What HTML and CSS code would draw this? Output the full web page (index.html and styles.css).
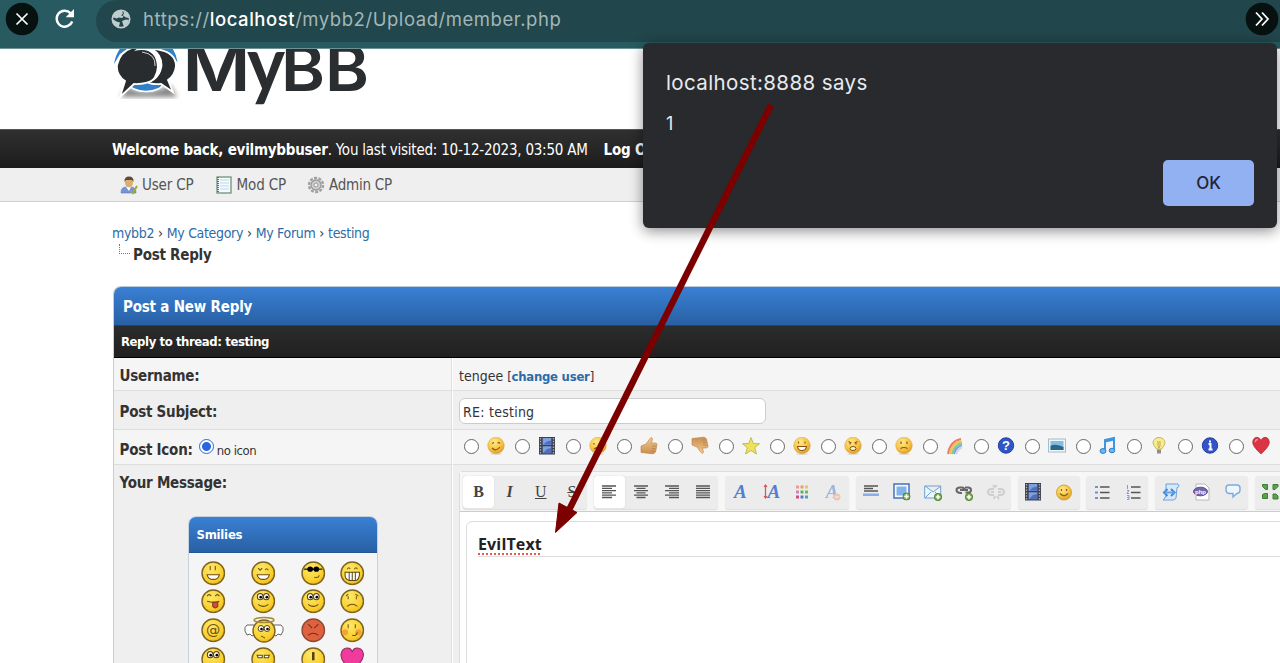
FILE: index.html
```html
<!DOCTYPE html>
<html lang="en">
<head>
<meta charset="utf-8">
<title>Post Reply</title>
<link rel="stylesheet" href="styles.css">
</head>
<body>
<svg class="defs" width="0" height="0">
  <defs>
    <radialGradient id="gold" cx=".4" cy=".3" r=".75"><stop offset="0" stop-color="#ffe98a"/><stop offset=".6" stop-color="#f5c440"/><stop offset="1" stop-color="#d8962a"/></radialGradient>
    <radialGradient id="yel" cx=".4" cy=".3" r=".8"><stop offset="0" stop-color="#ffe868"/><stop offset=".7" stop-color="#f8ce2c"/><stop offset="1" stop-color="#e3a81a"/></radialGradient>
    <linearGradient id="hand" x1="0" y1="0" x2="0" y2="1"><stop offset="0" stop-color="#f3cb8e"/><stop offset="1" stop-color="#c98d50"/></linearGradient>
    <symbol id="face" viewBox="0 0 18 18"><ellipse cx="9" cy="17" rx="6" ry="1" fill="#ddd"/><circle cx="9" cy="8.5" r="8.3" fill="url(#gold)" stroke="#dda23a" stroke-width=".5"/></symbol>
    <symbol id="film" viewBox="0 0 18 18"><rect x="1" y="0" width="16" height="17.5" fill="#3b3f4e"/><path d="M2.5 1v16M15.5 1v16" stroke="#a7adbd" stroke-width="1.4" stroke-dasharray="1.5 1.3"/><path d="M4.7 1h8.6v7H4.7zM4.7 9.3h8.6v7H4.7z" fill="#7f9fe0"/><path d="M5 7.5l4-3 4-1v4.3zM5 16l4-4 4-1v5z" fill="#4e70bb"/></symbol>
    <symbol id="thumb" viewBox="0 0 18 18"><path d="M1 9l5-2 4-5.500q2-2 2.500.500l-1 4h4q2 .600 1.500 2l-1.500 7q-1 2-3.500 1.800L5.500 16 1 15.500z" fill="url(#hand)" stroke="#b9804a" stroke-width=".6"/><path d="M12 9h4M12 11.500h3.500M11.500 14H15" stroke="#b9804a" stroke-width=".8"/></symbol>
    <symbol id="plus" viewBox="0 0 8 8"><circle cx="4" cy="4" r="3.700" fill="#7aad55" stroke="#447a25" stroke-width=".8"/><path d="M4 1.800v4.400M1.800 4h4.400" stroke="#fff" stroke-width="1.500"/></symbol>
    <symbol id="smile" viewBox="0 0 24 24"><circle cx="12" cy="12" r="11" fill="url(#yel)" stroke="#7e651f" stroke-width="1.400"/></symbol>
    <symbol id="eyes" viewBox="0 0 24 24"><ellipse cx="9" cy="7.500" rx="2.800" ry="3" fill="#fff" stroke="#5a4310"/><ellipse cx="15" cy="7.500" rx="2.800" ry="3" fill="#fff" stroke="#5a4310"/><circle cx="9.500" cy="8" r="1.300"/><circle cx="15.500" cy="8" r="1.300"/></symbol>
  </defs>
</svg>

<div class="window">
  <header class="browser">
    <svg class="round-btn" viewBox="0 0 34 34"><circle cx="17" cy="17" r="16.300" fill="#07110f"/><path d="M11.500 11.500l11 11m0-11l-11 11" stroke="#fff" stroke-width="1.700"/></svg>
    <svg class="reload" viewBox="0 0 22 22"><path d="M18.200 13.500A8 8 0 1 1 16.500 5.200L18.500 7.500" fill="none" stroke="#fff" stroke-width="2.400"/><path d="M20 1v8.300h-8.300z" fill="#fff"/></svg>
    <div class="omnibox">
      <svg class="globe" viewBox="0 0 20 20"><circle cx="10" cy="10" r="8.700" fill="#21464b" stroke="#c0cdce" stroke-width="1.700"/><path d="M8 1.500Q3 3 1.500 8l4 1.500 2.500-1 3.500.500 1-2-2.500-.500 2-2-1-2.500zM12 2l1 2-1 2.500 3 2 3 .500Q18 4 12 2zM1.500 10l4 2.500 3.500 1-.500 2-1 2.800Q2 16 1.500 10zM11 12l4-1.500 3 .500Q17 16 13 18l-1-3z" fill="#c0cdce"/></svg>
      <span class="url">https://<b>localhost</b>/mybb2/Upload/member.php</span>
    </div>
    <svg class="round-btn more" viewBox="0 0 34 34"><circle cx="17" cy="17" r="16.300" fill="#07110f"/><path d="M11 10.500l6 6.500-6 6.500M17 10.500l6 6.500-6 6.500" fill="none" stroke="#fff" stroke-width="1.800"/></svg>
  </header>

  <div class="brand">
    <svg class="logo" viewBox="0 0 270 79" width="270" height="79">
      <defs><filter id="soft"><feGaussianBlur stdDeviation="2.500"/></filter></defs>
      <path d="M8 48L16 38Q34 48 58 36l7 12z" fill="#888" filter="url(#soft)"/>
      <path d="M2 15Q5-3 20-10h30Q63-3 65.500 13L60 8Q50-2 34-2T8 5z" fill="#2f7fcb"/>
      <ellipse cx="34" cy="34" rx="17" ry="8.500" fill="#2f7fcb" stroke="#fff" stroke-width="1.500"/>
      <path d="M44 0Q64 3 64 17Q63 26 56 31l5 12-12-8Q38 36 34 32V2z" fill="#292c2e" stroke="#fff" stroke-width="1.800"/>
      <path d="M26-2Q50-1 49.500 17Q46 36 22 35L8 48l5-16Q4 26 5 16Q9-1 26-2z" fill="#292c2e" stroke="#fff" stroke-width="1.800"/>
      <path d="M22 2Q44-3 45 18Q44 29 36 34Q49 29 49.500 17Q49-3 29-3z" fill="#fff"/>
      <path d="M30 3Q44 5 43 17" fill="none" stroke="#fff" stroke-width=".8"/>
      <g class="logo-word"><text x="70.500" y="42" font-size="63" textLength="68" lengthAdjust="spacingAndGlyphs">M</text><text class="logo-y" x="135" y="42" font-size="76" textLength="38" lengthAdjust="spacingAndGlyphs">y</text><text x="169" y="42" font-size="63" textLength="88" lengthAdjust="spacingAndGlyphs">BB</text></g>
    </svg>
  </div>

  <div class="welcome"><strong class="w-name">Welcome back, evilmybbuser</strong><span class="w-visit">. You last visited: 10-12-2023, 03:50 AM</span><strong class="w-log">Log Out</strong></div>

  <nav class="panel-links">
    <a><svg viewBox="0 0 18 18"><path d="M1 17q0-6 5-6h5q5 0 5 6z" fill="#7795cf" stroke="#5a78b6" stroke-width=".6"/><path d="M6 11l3 4 2-4z" fill="#fff"/><ellipse cx="9" cy="6.500" rx="4" ry="5" fill="#dcae72"/><path d="M4.500 6Q4 .500 9 .500T13.500 6L12 4H6z" fill="#5e4a35"/><path d="M11 15l2 2 4-7" fill="none" stroke="#a3a83a" stroke-width="2"/></svg><span>User CP</span></a>
    <a><svg viewBox="0 0 18 18"><rect x="2" y="1" width="14" height="16" fill="#f4fafd" stroke="#6c9475" stroke-width="1.300"/><path d="M5 4h9M5 7h9M5 10h9M5 13h9" stroke="#c2d7e9"/><path d="M3 1v16" stroke="#557084" stroke-width="2" stroke-dasharray="1 1"/></svg><span>Mod CP</span></a>
    <a><svg viewBox="0 0 18 18"><circle cx="9" cy="9" r="7" fill="none" stroke="#a0a0a0" stroke-width="2.400" stroke-dasharray="3 1.400"/><circle cx="9" cy="9" r="5" fill="#cfcfcf" stroke="#999" stroke-width="1.300"/><circle cx="9" cy="9" r="2" fill="#f3f3f3" stroke="#999"/></svg><span class="admin">Admin CP</span></a>
  </nav>

  <main class="content">
    <div class="crumbs"><a>mybb2</a><i>›</i><a>My Category</a><i>›</i><a>My Forum</a><i>›</i><a>testing</a></div>
    <div class="active-crumb"><span class="elbow"></span><strong>Post Reply</strong></div>

    <section class="tborder">
      <h1 class="thead">Post a New Reply</h1>
      <div class="tcat">Reply to thread: testing</div>
      <div class="row r1"><div class="label"><b>Username:</b></div><div class="cell"><span class="tengee">tengee</span> <span class="change">[<b>change user</b>]</span></div></div>
      <div class="row r2 alt"><div class="label"><b>Post Subject:</b></div><div class="cell"><div class="subject">RE: testing</div></div></div>
      <div class="row r3"><div class="label"><b>Post Icon:</b><span class="radio on"></span><span class="noicon">no icon</span></div>
        <div class="cell icons">
          <label><span class="radio"></span><svg viewBox="0 0 18 18"><use href="#face"/><path d="M5 6.500l2-1M10.500 6q1.500-1 2.500.500M5 11q4 4 8-1" fill="none" stroke="#89521a" stroke-width="1.200"/></svg></label>
          <label><span class="radio"></span><svg viewBox="0 0 18 18"><use href="#film"/></svg></label>
          <label><span class="radio"></span><svg viewBox="0 0 18 18"><use href="#face"/><path d="M5 6v1.500M12 6v1.500M5 12q4-3 8 0" fill="none" stroke="#89521a" stroke-width="1.300"/></svg></label>
          <label><span class="radio"></span><svg viewBox="0 0 18 18"><use href="#thumb"/></svg></label>
          <label><span class="radio"></span><svg viewBox="0 0 18 18"><g transform="matrix(1 0 0 -1 0 17)"><use href="#thumb" width="18" height="18"/></g></svg></label>
          <label><span class="radio"></span><svg viewBox="0 0 18 18"><path d="M9 .500l2.300 6 6.200.200-4.800 4L14.500 17 9 13.500 3.500 17l1.800-6.300L.500 6.700l6.200-.200z" fill="#ece25b" stroke="#b5b138" stroke-width=".8"/></svg></label>
          <label><span class="radio"></span><svg viewBox="0 0 18 18"><use href="#face"/><path d="M5.500 4.500v2M12 4.500v2M4.500 9.500h9q-.500 4-4.500 4t-4.500-4z" fill="#fff" stroke="#89521a" stroke-width="1.100"/></svg></label>
          <label><span class="radio"></span><svg viewBox="0 0 18 18"><use href="#face"/><path d="M4.500 4.500l3 1.500M13.500 4.500l-3 1.500M6 6v1.500M12 6v1.500" stroke="#89521a" stroke-width="1.200"/><ellipse cx="9" cy="11.500" rx="3" ry="2" fill="#fff1c0" stroke="#89521a"/></svg></label>
          <label><span class="radio"></span><svg viewBox="0 0 18 18"><use href="#face"/><path d="M6 4.500v2.500M12 4.500v2.500M5.500 11.500q3.500-2 7 0" fill="none" stroke="#89521a" stroke-width="1.200"/></svg></label>
          <label><span class="radio"></span><svg viewBox="0 0 18 18" fill="none" stroke-width="2"><path d="M2 17Q4 4 15 2" stroke="#f07a6a"/><path d="M4 17Q6 6 15.500 4" stroke="#f5bf54"/><path d="M6 17Q8 8 16 6" stroke="#83cf72"/><path d="M8 17Q10 10 16 8" stroke="#6fa6ef"/><path d="M10 17Q12 12 16 10" stroke="#d9cdf0"/></svg></label>
          <label><span class="radio"></span><svg viewBox="0 0 18 18"><circle cx="9" cy="8.500" r="7.700" fill="#3155c8" stroke="#2340a0"/><text class="glyph" x="9" y="13">?</text></svg></label>
          <label><span class="radio"></span><svg viewBox="0 0 18 18"><rect x=".5" y="2" width="17" height="13" fill="#eef7fb" stroke="#a9bac8"/><path d="M2.500 4h13v9h-13z" fill="#82bde4"/><path d="M2.500 9q4-3 13 1v3h-13z" fill="#2d6784"/></svg></label>
          <label><span class="radio"></span><svg viewBox="0 0 18 18"><path d="M6 13V3l9-2v12" fill="none" stroke="#3f96df" stroke-width="2"/><path d="M6 4l9-2" stroke="#3f96df" stroke-width="3"/><ellipse cx="4" cy="14" rx="3" ry="2.400" fill="#6bb6f0" stroke="#2d82cb"/><ellipse cx="13" cy="13.500" rx="2.800" ry="2.300" fill="#6bb6f0" stroke="#2d82cb"/></svg></label>
          <label><span class="radio"></span><svg viewBox="0 0 18 18"><path d="M6.500 12Q3 8 3 5.500Q4 .500 9 .500t6 5Q15 8 11.500 12z" fill="#f5ec98" stroke="#c7b658"/><path d="M8 4v5l1 2 1-2V4" fill="none" stroke="#d1a43d"/><path d="M7 12.500h4v4H7z" fill="#8e8e88"/></svg></label>
          <label><span class="radio"></span><svg viewBox="0 0 18 18"><circle cx="9" cy="8.500" r="7.700" fill="#3155c8" stroke="#2340a0"/><path d="M7.500 7h2v5.500m-2 0h4M9 3.500v2" fill="none" stroke="#fff" stroke-width="2"/></svg></label>
          <label><span class="radio"></span><svg viewBox="0 0 18 18"><path d="M9 17Q0 9 .700 4.500Q2-.500 6 .500 8 1 9 3.500 10 1 12 .500q4-1 5.300 4Q18 9 9 17z" fill="#dc3443" stroke="#a92632" stroke-width=".7"/><path d="M3 5q1-3 3-2.500" stroke="#f58f95" stroke-width="1.500" fill="none"/></svg></label>
        </div></div>
      <div class="row r4 alt">
        <div class="label"><b class="t-msg">Your Message:</b>
          <div class="smilies"><h2>Smilies</h2>
            <div class="smile-grid">
              <svg viewBox="0 0 24 24"><use href="#smile"/><path d="M9 5v4M14 5v4" stroke="#694e12"/><path d="M6 13.500h12q-1 4.500-6 4.500t-6-4.500z" fill="#fff" stroke="#694e12"/></svg>
              <svg viewBox="0 0 24 24"><use href="#smile"/><path d="M7 7l2 2 2-2M14 9q1-3 3 0" fill="none" stroke="#694e12"/><path d="M6 13.500h12q-1 4.500-6 4.500t-6-4.500z" fill="#fff" stroke="#694e12"/></svg>
              <svg viewBox="0 0 24 24"><use href="#smile"/><path d="M3 8h18" stroke="#111" stroke-width="1.200"/><ellipse cx="9" cy="8" rx="2.800" ry="2.500"/><ellipse cx="15" cy="8" rx="2.800" ry="2.500"/><path d="M13 16q4 1 5-2" fill="none" stroke="#694e12"/></svg>
              <svg viewBox="0 0 24 24"><use href="#smile"/><path d="M7 8q2-3 3 0M14 8q2-3 3 0" fill="none" stroke="#694e12"/><path d="M5 11h14v3q-1 5-4 5H9q-4-1-4-5zM9 11v8M12 11v8M15 11v8" fill="#fff" stroke="#594512"/></svg>
              <svg viewBox="0 0 24 24"><use href="#smile"/><path d="M6 7q2-3 4 0M14 7q2-3 4 0M6 12q6 2 12 0" fill="none" stroke="#694e12"/><path d="M11.500 13h5v4q-2.500 3-5 0z" fill="#cf5035" stroke="#81351f"/></svg>
              <svg viewBox="0 0 24 24"><use href="#smile"/><use href="#eyes"/><path d="M7 15q5 4 10 0" fill="none" stroke="#694e12"/></svg>
              <svg viewBox="0 0 24 24"><use href="#smile"/><use href="#eyes"/><path d="M7 15q5 4 10 0" fill="none" stroke="#694e12"/></svg>
              <svg viewBox="0 0 24 24"><use href="#smile"/><path d="M8 5l-2 2M15 5l3 2M8 7v3M16 7v3M7 17q5-4 10 0" fill="none" stroke="#694e12"/></svg>
              <svg viewBox="0 0 24 24"><use href="#smile"/><text class="at" x="12" y="16.500">@</text></svg>
              <svg class="angel" viewBox="0 0 40 26"><path d="M10 8H3q-3 2-2 6l2 4 3-1 2 2 5-2zM30 8h7q3 2 2 6l-2 4-3-1-2 2-5-2z" fill="#fff" stroke="#666"/><use href="#smile" x="8" y="2" width="24" height="24"/><use href="#eyes" x="8" y="4" width="24" height="24"/><ellipse cx="20" cy="3" rx="10" ry="2.500" fill="none" stroke="#aa8b35" stroke-width="1.500"/><path d="M17 19l4 2" stroke="#694e12"/></svg>
              <svg viewBox="0 0 24 24"><circle cx="12" cy="12" r="11" fill="#df613d" stroke="#8e4935" stroke-width="1.300"/><path d="M7 6l4 4M17 6l-4 4M7 17q5-4 10 0" fill="none" stroke="#762e20"/></svg>
              <svg viewBox="0 0 24 24"><use href="#smile"/><circle cx="5" cy="14" r="3" fill="#f4a03b"/><circle cx="18" cy="14" r="3" fill="#f4a03b"/><path d="M8 6v4M15 6v4M12 17q4 1 5-3" fill="none" stroke="#694e12"/></svg>
              <svg viewBox="0 0 24 24"><use href="#smile"/><use href="#eyes"/></svg>
              <svg viewBox="0 0 24 24"><use href="#smile"/><path d="M6 8h5v2.500H7zM13 8h5l-1 2.500h-4z" fill="#fff" stroke="#594512"/></svg>
              <svg viewBox="0 0 24 24"><use href="#smile"/><path d="M12 5v8" stroke="#514014" stroke-width="2.500"/></svg>
              <svg viewBox="0 0 24 24"><path d="M12 23Q0 14 1 7Q2 1 7 1q4 0 5 4 1-4 5-4 5 0 6 6 0 7-11 16z" fill="#f03b9c" stroke="#8b2c62"/></svg>
            </div>
          </div>
        </div>
        <div class="cell">
          <div class="editor">
            <div class="toolbar">
              <div class="group"><span class="btn on serif"><b>B</b></span><span class="btn serif"><b><i>I</i></b></span><span class="btn serif"><u>U</u></span><span class="btn serif"><s>S</s></span></div>
              <div class="group align"><span class="btn on"><svg viewBox="0 0 14 14"><path d="M0 1h14M0 3.300h10M0 5.600h14M0 7.900h10M0 10.200h14M0 12.500h10" stroke="#555" stroke-width="1.300"/></svg></span><span class="btn"><svg viewBox="0 0 14 14"><path d="M0 1h14M2.500 3.300h9M0 5.600h14M2.500 7.900h9M0 10.200h14M2.500 12.500h9" stroke="#555" stroke-width="1.300"/></svg></span><span class="btn"><svg viewBox="0 0 14 14"><path d="M0 1h14M4 3.300h10M0 5.600h14M4 7.900h10M0 10.200h14M4 12.500h10" stroke="#555" stroke-width="1.300"/></svg></span><span class="btn"><svg viewBox="0 0 14 14"><path d="M0 1h14M0 3.300h14M0 5.600h14M0 7.900h14M0 10.200h14M0 12.500h14" stroke="#555" stroke-width="1.300"/></svg></span></div>
              <div class="group"><span class="btn blue-a"><i>A</i></span><span class="btn blue-a size"><svg viewBox="0 0 5 16"><path d="M2.500 1v13M1 3l1.500-2L4 3M1 12l1.500 2L4 12" fill="none" stroke="#d05656" stroke-width="1.200"/></svg><i>A</i></span><span class="btn dots"><svg viewBox="0 0 16 16"><path d="M2 1.500h3v3H2z" fill="#e9a08b"/><path d="M6.500 1.500h3v3h-3z" fill="#dfa465"/><path d="M11 1.500h3v3h-3z" fill="#e5c567"/><path d="M2 6.500h3v3H2z" fill="#d780c1"/><path d="M6.500 6.500h3v3h-3z" fill="#56b56b"/><path d="M11 6.500h3v3h-3z" fill="#73b85d"/><path d="M2 11.500h3v3H2z" fill="#d04c83"/><path d="M6.500 11.500h3v3h-3z" fill="#5e77cf"/><path d="M11 11.500h3v3h-3z" fill="#48a5b5"/></svg></span><span class="btn blue-a clear"><i>A</i><svg viewBox="0 0 8 8"><circle cx="4" cy="4" r="3.500" fill="#e9a27c"/><path d="M2 4h4" stroke="#fff"/></svg></span></div>
              <div class="group"><span class="btn"><svg viewBox="0 0 18 18"><path d="M2 3h14M2 5.500h9M2 8h14" stroke="#555" stroke-width="1.400"/><path d="M1 10.500h16v2.500H1z" fill="#88ade7"/></svg></span><span class="btn"><svg viewBox="0 0 18 18"><rect x="1" y="1" width="15" height="14" fill="#f5faff" stroke="#4672b9" stroke-width="1.500"/><path d="M3.500 3.500h10v9h-10z" fill="#82b2e7"/><use href="#plus" x="9.500" y="9.500" width="8" height="8"/></svg></span><span class="btn"><svg viewBox="0 0 18 18"><path d="M.700 3h16v12h-16zM1 3l8 6 8-6M1 15l6-6M17 15l-6-6" fill="#edf6fe" stroke="#6ca0d2"/><use href="#plus" x="10" y="10" width="8" height="8"/></svg></span><span class="btn"><svg viewBox="0 0 18 18"><path d="M7 10H5q-3.500-.500-3.500-3T5 4.500h2q2.500 0 2.500 2.500M5 7h8M10.500 9.500H13q3 0 3-2.500t-3-2.500h-3" fill="none" stroke="#666" stroke-width="2"/><use href="#plus" x="10" y="10" width="8" height="8"/></svg></span><span class="btn pale"><svg viewBox="0 0 18 18"><path d="M7 12H4q-3-.500-3-3t3-3h3M11 6h3q3 .500 3 3t-3 3h-3M4 9h3M11 9h3M8 5L6 2M10 13l2 3M9 4V2M8 13l-1 3" fill="none" stroke="#999" stroke-width="2"/></svg></span></div>
              <div class="group"><span class="btn"><svg viewBox="0 0 18 18"><use href="#film"/></svg></span><span class="btn"><svg viewBox="0 0 18 18"><circle cx="9" cy="9.500" r="7.500" fill="url(#gold)" stroke="#d8a336"/><path d="M6.500 6v2M11.500 6v2M5 10.500q4 4.500 8 0" fill="none" stroke="#89611d" stroke-width="1.300"/></svg></span></div>
              <div class="group list"><span class="btn"><svg viewBox="0 0 16 16"><path d="M6 3h9.500M6 8.500h9.500M6 14h9.500" stroke="#555" stroke-width="1.400"/><path d="M1 2h3v2H1zM1 7.500h3v2H1zM1 13h3v2H1z" fill="#6e91df"/></svg></span><span class="btn"><svg viewBox="0 0 16 16"><path d="M6 3h9.500M6 8.500h9.500M6 14h9.500" stroke="#555" stroke-width="1.400"/><path d="M2.500 1v4M2 6.500h2l-2 3h2M2 11.500h2v2H2h2v2H2" fill="none" stroke="#7b9cd9"/></svg></span></div>
              <div class="group"><span class="btn"><svg viewBox="0 0 18 18"><path d="M4 1h12q2 2 0 3.500h-1L14 15q-1 2-3 2H1q2-1 2-3h1z" fill="#d6e9fc" stroke="#71a0d5"/><path d="M5.500 6L2 9.500 5.500 13M9 6l3.500 3.500L9 13" fill="none" stroke="#4289d6" stroke-width="2"/><path d="M3 9.500h9" stroke="#66a5e4" stroke-width="2"/></svg></span><span class="btn"><svg viewBox="0 0 18 18"><path d="M3 1h9l4 4v12H3z" fill="#fff" stroke="#b7b7bf"/><ellipse cx="7.500" cy="8.500" rx="7" ry="4.300" fill="#6e68ad" stroke="#54508d"/><text class="php" x="7.500" y="10.500">php</text></svg></span><span class="btn"><svg viewBox="0 0 18 18"><path d="M5 2h8q3 0 3 3v2q0 3-3 3.500L9 14v-3.500H5Q2 10 2 7V5q0-3 3-3z" fill="#edf6ff" stroke="#7fa9dd" stroke-width="1.400"/></svg></span></div>
              <div class="group"><span class="btn"><svg viewBox="0 0 18 18" fill="#5ca04c" stroke="#3c7f30"><path d="M1.500 1.500h5v5h-2l-3-3zM12 1.500h5v2l-3 3h-2zM1.500 11.500l2-1h3v5h-5zM12 11h3l2 2v3h-5z"/></svg></span></div>
            </div>
            <div class="textarea"><div class="line"><span class="evil">EvilText</span></div></div>
          </div>
        </div>
      </div>
    </section>
  </main>

  <div class="dialog">
    <div class="d-title">localhost:8888 says</div>
    <div class="d-msg">1</div>
    <button class="ok">OK</button>
  </div>
  <svg class="arrow" viewBox="0 0 1280 663"><path d="M771 105L567 514" stroke="#7c0000" stroke-width="6.500"/><path d="M555.500 532.500L559 503l18 9.500z" fill="#7c0000" stroke="#7c0000"/></svg>
</div>
</body>
</html>
```

FILE: styles.css
```css
* { box-sizing: border-box; }
body { margin: 0; background: #fff; color: #333; font-family: "DejaVu Sans Condensed", "DejaVu Sans", sans-serif; font-size: 14px; font-stretch: condensed; }
svg { display: block; flex: none; overflow: visible; }
.defs { position: absolute; }
h1, h2 { margin: 0; }
.window { position: relative; width: 1280px; height: 663px; overflow: hidden; }

.browser { display: flex; height: 49px; background: #285b61; border-bottom: 1px solid #6d9296; position: relative; z-index: 2; }
.round-btn { width: 34px; height: 34px; margin: 2px 0 0 5px; }
.reload { width: 22px; height: 22px; margin: 8px 0 0 15px; }
.omnibox { display: flex; align-items: center; gap: 12px; flex: 1; height: 42px; margin-left: 20px; padding: 0 0 5px 15px; background: #21464b; border-radius: 21px 0 0 21px; }
.globe { width: 20px; height: 20px; }
.url { font: 18.500px/24px Inter, sans-serif; letter-spacing: .55px; color: #a4b6b8; white-space: nowrap; }
.url b { font-weight: 500; color: #fff; }
.more { position: absolute; right: 1px; top: 0; }

.brand { height: 80px; padding-left: 112px; overflow: hidden; }
.logo-word { font-family: Inter, sans-serif; font-weight: 600; fill: #2b2e30; }
.logo-y { font-family: Lato, sans-serif; font-weight: 700; }
.welcome { display: flex; height: 39px; padding-left: 112px; line-height: 40px; font-size: 15px; letter-spacing: -.23px; color: #fff; background: linear-gradient(#303030, #1c1c1c); border-top: 1px solid #555; white-space: nowrap; }
.w-log { margin-left: 16px; }
.panel-links { display: flex; height: 34px; padding-left: 120px; background: #efefef; border-bottom: 1px solid #d0d0d0; }
.panel-links a { display: flex; align-items: center; gap: 4px; margin-right: 21px; padding-top: 1px; font-size: 15px; letter-spacing: -.15px; color: #555; }
.panel-links svg { width: 18px; height: 18px; }
.panel-links .admin { letter-spacing: -.25px; }
.content { padding: 21px 0 0 112px; }
.crumbs { display: flex; line-height: 20px; font-size: 14px; letter-spacing: -.33px; color: #333; }
.crumbs a { color: #2d6ca8; }
.crumbs i { font-style: normal; margin: 0 4px; }
.active-crumb { display: flex; height: 22px; line-height: 25px; font-size: 15px; letter-spacing: -.25px; }
.elbow { width: 11px; height: 10px; margin: 1px 3px 0 7px; border-left: 1px dotted #777; border-bottom: 1px dotted #777; }

.tborder { width: 1300px; margin: 21px 0 0 1px; border: 1px solid #ccc; border-top-color: #bcd; border-radius: 8px 8px 0 0; }
.thead { height: 38px; padding-left: 9px; line-height: 40px; font-size: 15px; letter-spacing: -.2px; color: #fff; background: linear-gradient(#3a80d4, #2860a4); border-radius: 7px 7px 0 0; }
.tcat { height: 33px; padding-left: 7px; line-height: 32px; font-size: 13px; letter-spacing: -.42px; font-weight: bold; color: #fff; background: linear-gradient(#2c2c2c, #202020); border-top: 1px solid #20436d; border-bottom: 1px solid #000; }
.row { display: flex; background: #f5f5f5; }
.row.alt { background: #efefef; }
.label { flex: none; width: 338px; padding-left: 5.500px; font-size: 15px; letter-spacing: -.25px; border-right: 1px solid #dedede; border-bottom: 1px solid #dedede; }
.cell { flex: 1; padding-left: 6px; border-bottom: 1px solid #dedede; border-left: 1px solid #fff; }
.r1 { height: 33px; line-height: 37px; }
.r2 { height: 39px; line-height: 43px; }
.r3 { height: 35px; }
.r4 { height: 220px; }
.r3 .label { display: flex; line-height: 40px; }
.tengee { font-size: 14px; }
.change { font-size: 13px; letter-spacing: -.25px; }
.change b { color: #2d6ca8; }
.subject { width: 307px; height: 26px; margin-top: 7px; padding-left: 3px; line-height: 26px; font-size: 14px; letter-spacing: .25px; background: #fff; border: 1px solid #ccc; border-radius: 6px; }
.radio { width: 15px; height: 15px; flex: none; background: #fff; border: 1px solid #666; border-radius: 50%; }
.radio.on { margin: 9px 3px 0 6px; border: 1px solid #2b67dc; background: radial-gradient(#2b67dc 0 4px, #fff 5px); }
.noicon { font-size: 13px; letter-spacing: -.4px; line-height: 41px; }
.icons { display: flex; padding-left: 11px; }
.icons label { display: flex; width: 51px; flex: none; gap: 8px; }
.icons .radio { margin-top: 9px; }
.icons svg { width: 18px; height: 18px; margin-top: 7px; }
.glyph { font: bold 13px "Liberation Sans", sans-serif; fill: #fff; text-anchor: middle; }
.t-msg { display: block; height: 50.500px; line-height: 36px; }
.smilies { width: 190px; height: 190px; margin-left: 68px; background: #f5f5f5; border: 1px solid #c7d2df; border-radius: 8px 8px 0 0; }
.smilies h2 { height: 36px; padding-left: 8px; line-height: 36px; font-size: 13px; color: #fff; background: linear-gradient(#3a80d4, #2860a4); border-bottom: 1px solid #26568f; border-radius: 7px 7px 0 0; }
.smile-grid { display: grid; grid-template-columns: 50px 50px 49px 29px; grid-auto-rows: 28.700px; justify-items: center; align-items: center; padding-top: 6px; }
.smile-grid svg { width: 24.500px; height: 24.500px; }
.smile-grid .angel { width: 40px; height: 26px; }
.at { font: 14px "DejaVu Sans", sans-serif; letter-spacing: 0; fill: #6b4e13; text-anchor: middle; }
.editor { width: 1000px; height: 220px; margin-top: 6px; background: #fff; border: 1px solid #ddd; border-radius: 4px 0 0; }
.toolbar { display: flex; gap: 6.500px; height: 40px; padding: 4px 0 0 3px; background: #f7f7f7; border-bottom: 1px solid #ccc; }
.group { display: flex; flex: none; height: 33px; background: #ececec; border-radius: 3px; box-shadow: 0 1px 1px #ddd; }
.btn { display: flex; width: 31.100px; height: 32px; align-items: center; justify-content: center; }
.btn.on { background: #fff; border-radius: 3px; box-shadow: 0 0 1px #bbb; }
.btn svg { width: 18px; height: 18px; }
.align .btn svg { width: 14px; height: 14px; }
.dots svg, .list .btn svg { width: 16px; height: 16px; }
.serif { font: 16px "Liberation Serif", serif; color: #444; }
.blue-a { font: bold 19px "Liberation Serif", serif; color: #507fd0; }
.btn.size svg { width: 5px; height: 16px; }
.clear { opacity: .5; }
.btn.clear svg { width: 8px; height: 8px; margin: 9px 0 0 -5px; }
.pale { opacity: .35; }
.php { font: bold 6px "Liberation Sans", sans-serif; fill: #fff; text-anchor: middle; }
.textarea { height: 180px; margin: 9px 0 0 6px; padding: 8px 0 0 11px; border: 1px solid #ddd; border-radius: 6px 0 0; }
.line { height: 27px; line-height: 28px; border-bottom: 1px solid #ddd; }
.evil { font: bold 16px/28px "Open Sans", sans-serif; letter-spacing: .15px; color: #222; text-decoration: underline dotted #e25a4e 2px; text-underline-offset: 3px; }

.dialog { position: absolute; z-index: 3; left: 643px; top: 43px; width: 634px; height: 185px; padding: 27px 23px 23px; background: #292a2d; border-radius: 6px; box-shadow: 0 3px 14px rgba(0, 0, 0, .45); font-family: Inter, sans-serif; color: #e8eaed; display: grid; grid-template-rows: 25px 1fr 45px; }
.d-title { font-size: 20.500px; line-height: 25px; letter-spacing: .38px; }
.d-msg { font-size: 18px; margin-top: 18px; line-height: 22px; }
.ok { justify-self: end; width: 91px; height: 46px; border: 0; border-radius: 5px; background: #92b1f3; color: #202638; font: 500 17px Inter, sans-serif; }
.arrow { position: absolute; z-index: 4; left: 0; top: 0; width: 1280px; height: 663px; pointer-events: none; }
```
